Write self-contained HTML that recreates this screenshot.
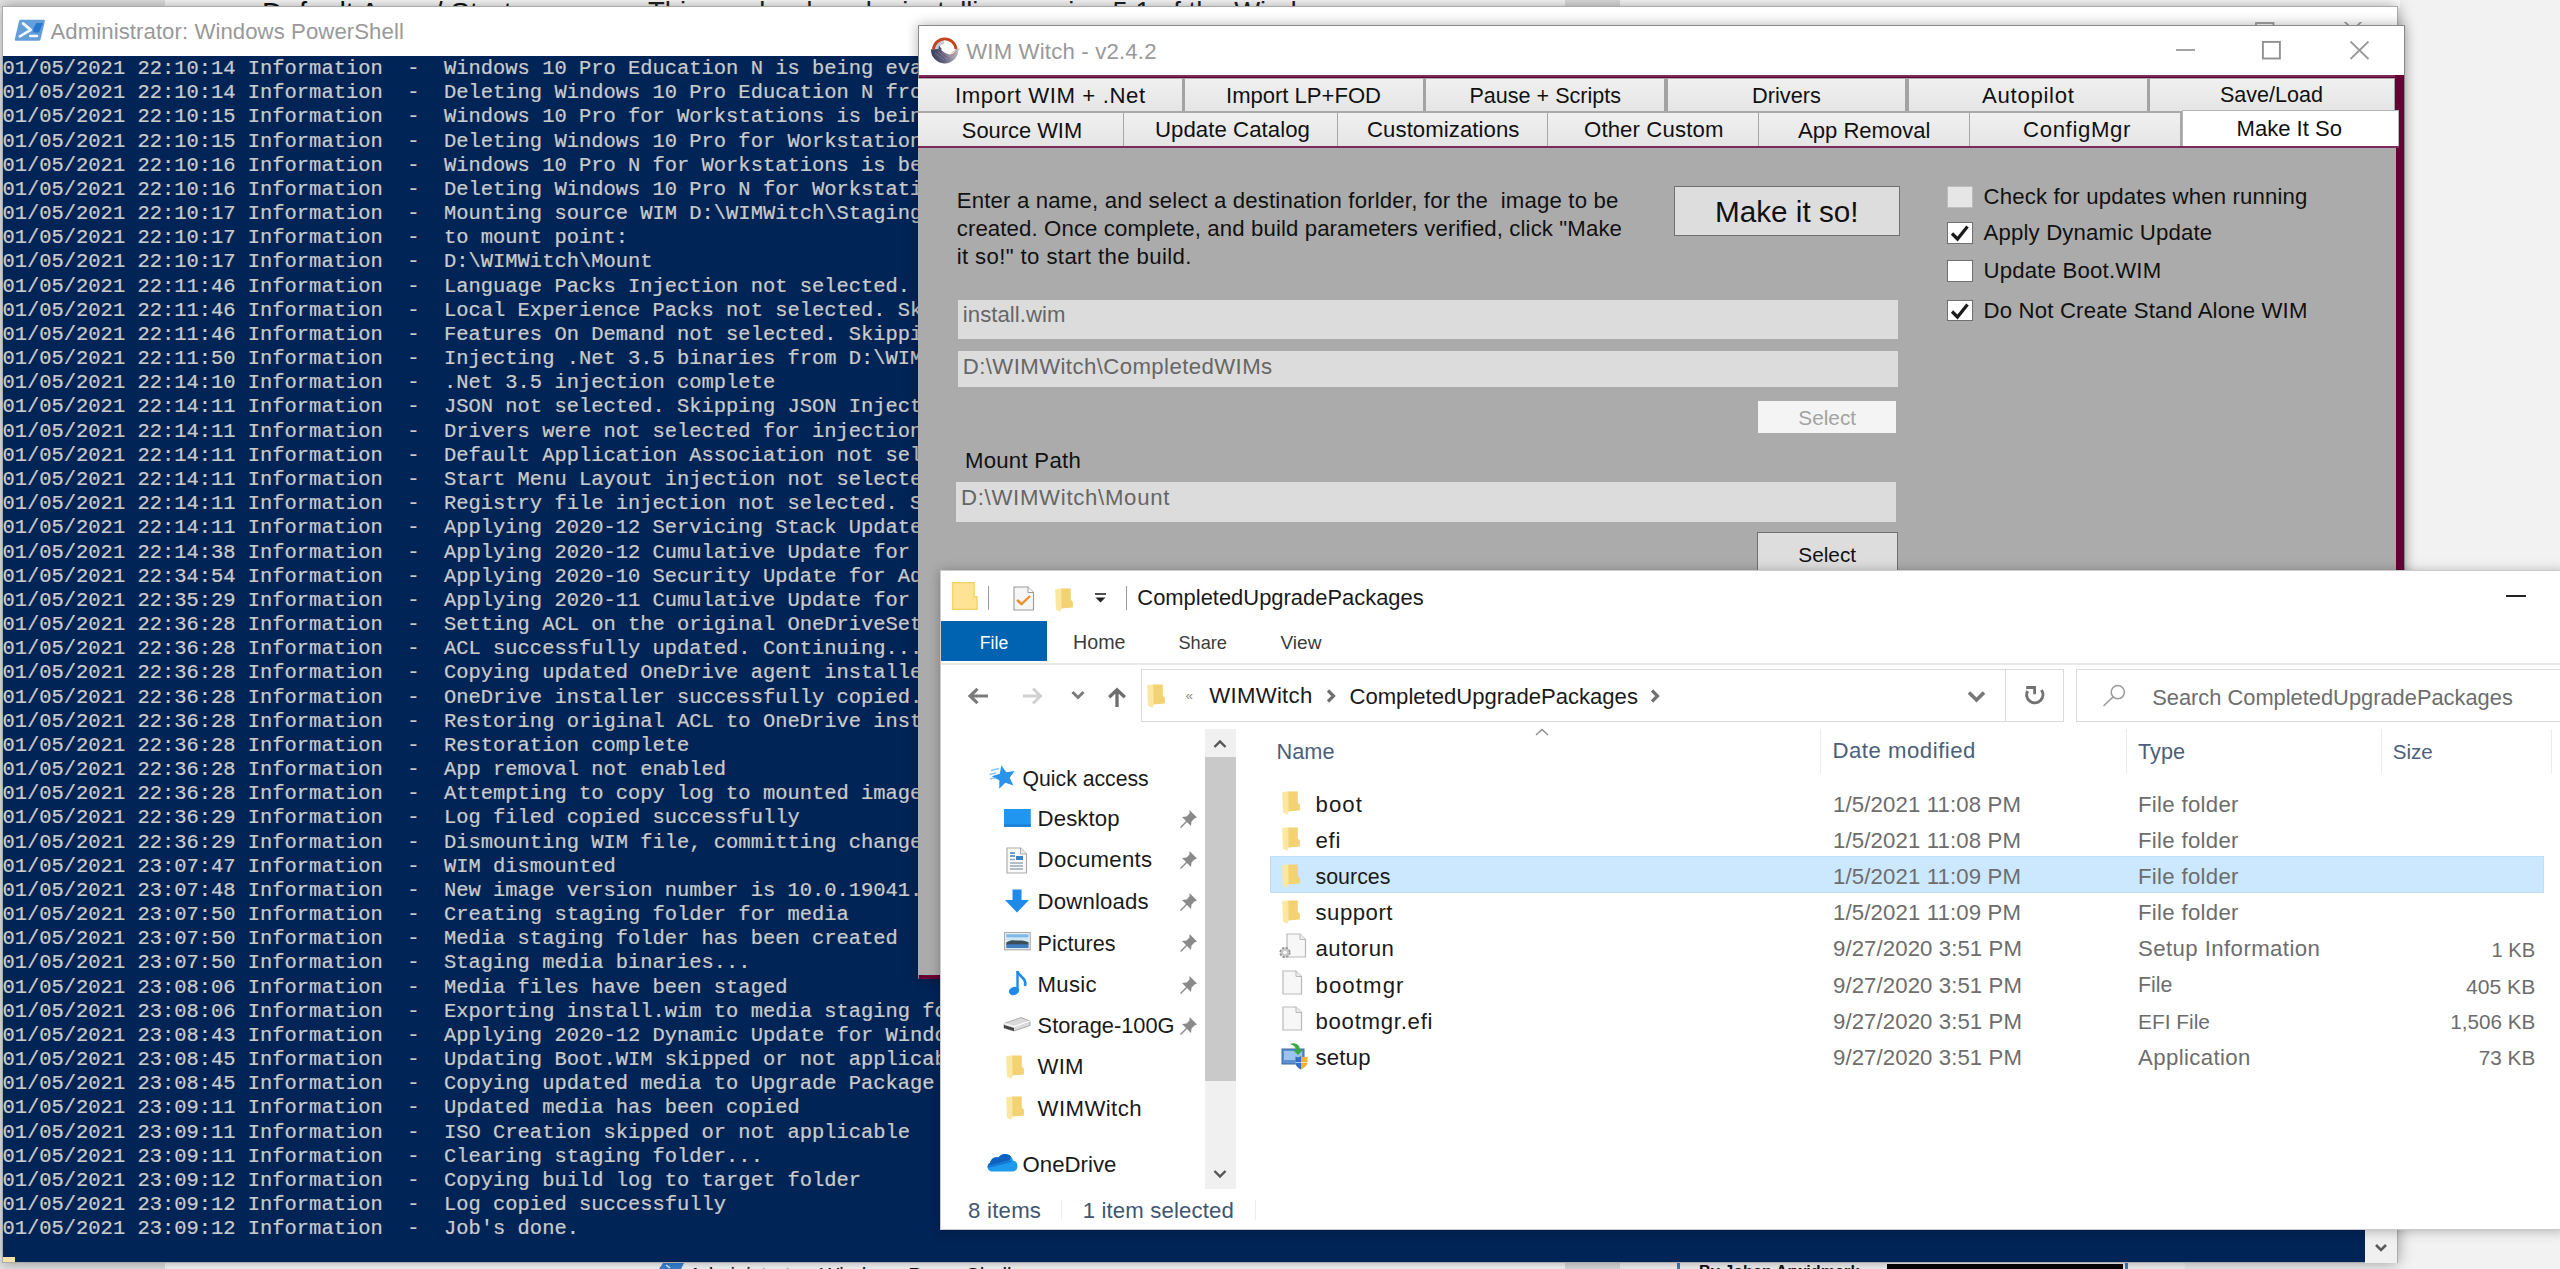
<!DOCTYPE html>
<html><head><meta charset="utf-8"><title>WIM Witch</title>
<style>
html,body{margin:0;padding:0;}
body{width:2560px;height:1269px;overflow:hidden;position:relative;background:#f2f2f2;font-family:"Liberation Sans",sans-serif;}
.r{position:absolute;box-sizing:border-box;display:block;}
.t{position:absolute;white-space:pre;line-height:1;font-family:"Liberation Sans",sans-serif;}
.ps{position:absolute;white-space:pre;font-family:"Liberation Mono",monospace;color:#cbcbcb;-webkit-text-stroke:0.22px #cbcbcb;margin:0;}
</style></head><body>
<div class="r " style="left:0px;top:0px;width:165px;height:8px;background:#e6e6e6;"></div>
<div class="r " style="left:165px;top:0px;width:1400px;height:8px;background:#ffffff;"></div>
<div class="r " style="left:1565px;top:0px;width:55px;height:8px;background:#e2e2e2;"></div>
<div class="r " style="left:1620px;top:0px;width:780px;height:8px;background:#ffffff;"></div>
<div class="r" style="left:0;top:0;width:2400px;height:7px;overflow:hidden;"><span class="t" style="left:262px;top:-1px;font-size:29px;color:#111;">Default Apps / Start</span><span class="t" style="left:648px;top:-2.5px;font-size:27.4px;color:#222;">This can be done by installing version 5.1 of the Windows</span></div>
<div class="r " style="left:0px;top:1260px;width:165px;height:9px;background:#e6e6e6;"></div>
<div class="r " style="left:165px;top:1260px;width:1400px;height:9px;background:#ffffff;"></div>
<div class="r " style="left:1565px;top:1260px;width:55px;height:9px;background:#e2e2e2;"></div>
<div class="r " style="left:1620px;top:1260px;width:565px;height:9px;background:#fbfbfb;"></div>
<div class="r " style="left:1677px;top:1263px;width:3px;height:6px;background:#3f7fd6;"></div>
<div class="r " style="left:1886.5px;top:1264px;width:236px;height:5px;background:#050505;"></div>
<div class="r " style="left:2124.5px;top:1263px;width:3px;height:6px;background:#3f7fd6;"></div>
<div class="r" style="left:0;top:1262px;width:2400px;height:7px;overflow:hidden;"><span class="t" style="left:688.5px;top:2.5px;font-size:20.4px;color:#111;">Administrator: Windows PowerShell</span><span class="t" style="left:1699px;top:0.5px;font-size:16.2px;font-weight:bold;color:#111;">By Johan Arwidmark</span></div>
<svg class="r" style="left:659px;top:1263px;" width="25" height="6" viewBox="0 0 25 6"><path d="M4 0 H25 L22 6 H0 Z" fill="#3b87dd"/><path d="M7 2 L11 5" stroke="#fff" stroke-width="1.5"/></svg>
<div class="r pswin" style="left:2px;top:6px;width:2396px;height:1257px;background:#ffffff;border:1px solid #ababab;box-shadow:0 0 14px rgba(0,0,0,.38);"></div>
<div class="r " style="left:3px;top:56px;width:2394px;height:1206px;background:#012456;"></div>
<svg class="r" style="left:14px;top:19px;" width="32" height="23" viewBox="0 0 32 23"><path d="M6.6 0.7 H29.6 Q31.3 0.7 30.9 2.2 L26.6 20.2 Q26.2 21.7 24.7 21.7 H2 Q0.4 21.7 0.8 20.2 L5 2.2 Q5.4 0.7 6.6 0.7 Z" fill="#649ed9"/><path d="M22.6 4 H29 L25 13.4 H19.5 Q18.5 9 22.6 4 Z" fill="#2676d2"/><path d="M9 4.4 L16.7 10.9 L5.9 17.4" fill="none" stroke="#f2f8ff" stroke-width="2.7" stroke-linecap="round" stroke-linejoin="round"/><path d="M16.2 17.1 H23" stroke="#f2f8ff" stroke-width="2.5" stroke-linecap="round"/></svg>
<span class="t" style="top:21.31px;font-size:22.20px;color:#999999;left:50.50px;letter-spacing:0.059px;">Administrator: Windows PowerShell</span>
<svg class="r" style="left:2255px;top:21.5px;" width="22" height="5" viewBox="0 0 22 5"><rect x="1" y="1" width="17.5" height="12" fill="none" stroke="#9a9a9a" stroke-width="1.8"/></svg>
<svg class="r" style="left:2343px;top:21.5px;" width="22" height="5" viewBox="0 0 22 5"><path d="M1 -1 L10 8 M19 -1 L10 8" stroke="#9a9a9a" stroke-width="1.7" fill="none"/></svg>
<pre class="ps" style="left:2.5px;top:57.07px;font-size:20.45px;line-height:24.167px;">01/05/2021 22:10:14 Information  -  Windows 10 Pro Education N is being evaluated
01/05/2021 22:10:14 Information  -  Deleting Windows 10 Pro Education N from WIM
01/05/2021 22:10:15 Information  -  Windows 10 Pro for Workstations is being evaluated
01/05/2021 22:10:15 Information  -  Deleting Windows 10 Pro for Workstations from WIM
01/05/2021 22:10:16 Information  -  Windows 10 Pro N for Workstations is being evaluated
01/05/2021 22:10:16 Information  -  Deleting Windows 10 Pro N for Workstations from WIM
01/05/2021 22:10:17 Information  -  Mounting source WIM D:\WIMWitch\Staging\install.wim
01/05/2021 22:10:17 Information  -  to mount point:
01/05/2021 22:10:17 Information  -  D:\WIMWitch\Mount
01/05/2021 22:11:46 Information  -  Language Packs Injection not selected. Skipping
01/05/2021 22:11:46 Information  -  Local Experience Packs not selected. Skipping
01/05/2021 22:11:46 Information  -  Features On Demand not selected. Skipping
01/05/2021 22:11:50 Information  -  Injecting .Net 3.5 binaries from D:\WIMWitch\imports
01/05/2021 22:14:10 Information  -  .Net 3.5 injection complete
01/05/2021 22:14:11 Information  -  JSON not selected. Skipping JSON Injection
01/05/2021 22:14:11 Information  -  Drivers were not selected for injection. Skipping.
01/05/2021 22:14:11 Information  -  Default Application Association not selected. Skipping
01/05/2021 22:14:11 Information  -  Start Menu Layout injection not selected. Skipping
01/05/2021 22:14:11 Information  -  Registry file injection not selected. Skipping
01/05/2021 22:14:11 Information  -  Applying 2020-12 Servicing Stack Update for Windows 10
01/05/2021 22:14:38 Information  -  Applying 2020-12 Cumulative Update for Windows 10
01/05/2021 22:34:54 Information  -  Applying 2020-10 Security Update for Adobe Flash Player
01/05/2021 22:35:29 Information  -  Applying 2020-11 Cumulative Update for .NET Framework
01/05/2021 22:36:28 Information  -  Setting ACL on the original OneDriveSetup.exe file
01/05/2021 22:36:28 Information  -  ACL successfully updated. Continuing...
01/05/2021 22:36:28 Information  -  Copying updated OneDrive agent installer...
01/05/2021 22:36:28 Information  -  OneDrive installer successfully copied.
01/05/2021 22:36:28 Information  -  Restoring original ACL to OneDrive installer.
01/05/2021 22:36:28 Information  -  Restoration complete
01/05/2021 22:36:28 Information  -  App removal not enabled
01/05/2021 22:36:28 Information  -  Attempting to copy log to mounted image
01/05/2021 22:36:29 Information  -  Log filed copied successfully
01/05/2021 22:36:29 Information  -  Dismounting WIM file, committing changes
01/05/2021 23:07:47 Information  -  WIM dismounted
01/05/2021 23:07:48 Information  -  New image version number is 10.0.19041.685
01/05/2021 23:07:50 Information  -  Creating staging folder for media
01/05/2021 23:07:50 Information  -  Media staging folder has been created
01/05/2021 23:07:50 Information  -  Staging media binaries...
01/05/2021 23:08:06 Information  -  Media files have been staged
01/05/2021 23:08:06 Information  -  Exporting install.wim to media staging folder...
01/05/2021 23:08:43 Information  -  Applying 2020-12 Dynamic Update for Windows 10 Version
01/05/2021 23:08:45 Information  -  Updating Boot.WIM skipped or not applicable
01/05/2021 23:08:45 Information  -  Copying updated media to Upgrade Package folder...
01/05/2021 23:09:11 Information  -  Updated media has been copied
01/05/2021 23:09:11 Information  -  ISO Creation skipped or not applicable
01/05/2021 23:09:11 Information  -  Clearing staging folder...
01/05/2021 23:09:12 Information  -  Copying build log to target folder
01/05/2021 23:09:12 Information  -  Log copied successfully
01/05/2021 23:09:12 Information  -  Job&#x27;s done.</pre>
<div class="r " style="left:3px;top:1257px;width:12px;height:5px;background:#f5e3a5;"></div>
<div class="r " style="left:2365px;top:1230px;width:32px;height:32.5px;background:#f0f0f0;"></div>
<svg class="r" style="left:2373px;top:1242px;" width="16" height="12" viewBox="0 0 16 12"><path d="M3 3 L8 8 L13 3" fill="none" stroke="#5a5a5a" stroke-width="2.6"/></svg>
<div class="r " style="left:918px;top:25px;width:1487px;height:953.5px;background:#660033;box-shadow:0 0 12px rgba(0,0,0,.30);border:1px solid #8a8a8a;border-bottom:none;"></div>
<div class="r " style="left:919px;top:26px;width:1485px;height:49px;background:#ffffff;"></div>
<svg class="r" style="left:930px;top:36px;" width="32" height="28" viewBox="0 0 32 28"><defs><linearGradient id="wg" x1="0" y1="0" x2="1" y2="0"><stop offset="0" stop-color="#3a3d5e"/><stop offset=".45" stop-color="#62627f"/><stop offset=".8" stop-color="#a59fb0"/><stop offset="1" stop-color="#d0c8cc"/></linearGradient></defs>
<path d="M6.8 13.2 A7.9 7.9 0 0 1 13.8 5.7" stroke="#c4c8d5" stroke-width="4.8" fill="none"/>
<path d="M1 13.2 A13.6 13.6 0 0 0 28.4 14.2 L30 12.6 L26 12.8 C24.6 16.6 22.4 18.6 20 18.5 C17.5 18.4 15 17.2 13.2 15.8 C12 14.9 11.2 14 10.8 13 Z" fill="url(#wg)"/>
<path d="M9 9.5 L12 13.2 L8.4 13.6 Z" fill="#4c4e70"/>
<path d="M5 17 L14 24 M8 15.5 L18 24 M12 16.5 L22 23 M16.5 18.2 L24.5 21" stroke="#b9b4c4" stroke-width=".7" opacity=".55"/>
<path d="M21 17.5 L24.5 14.5 M19 21 L25.5 17" stroke="#d08a5c" stroke-width=".9" opacity=".7"/>
<path d="M3.5 13.2 A11.3 11.3 0 0 1 26 13" stroke="#c4421e" stroke-width="2.9" fill="none"/></svg>
<span class="t" style="top:40.51px;font-size:22.20px;color:#999999;left:966.20px;letter-spacing:0.171px;">WIM Witch - v2.4.2</span>
<svg class="r" style="left:2175px;top:40px;" width="24" height="20" viewBox="0 0 24 20"><path d="M1 10 H20" stroke="#9a9a9a" stroke-width="1.8"/></svg>
<svg class="r" style="left:2261px;top:40px;" width="24" height="20" viewBox="0 0 24 20"><rect x="1.9" y="1.9" width="17" height="16.6" fill="none" stroke="#909090" stroke-width="1.9"/></svg>
<svg class="r" style="left:2349px;top:40px;" width="22" height="22" viewBox="0 0 22 22"><path d="M1.5 1.5 L19.5 19 M19.5 1.5 L1.5 19" stroke="#9a9a9a" stroke-width="1.8"/></svg>
<div class="r " style="left:919px;top:75px;width:1476px;height:2.2px;background:#7a2b57;"></div>
<div class="r " style="left:918px;top:77.5px;width:1477px;height:34px;background:#a3a3a3;"></div>
<div class="r " style="left:918px;top:77.5px;width:263.5px;height:33.5px;background:linear-gradient(#f0f0f0,#e5e5e5);border-top:1px solid #acacac;"></div>
<div class="r " style="left:1185px;top:77.5px;width:237.5px;height:33.5px;background:linear-gradient(#f0f0f0,#e5e5e5);border-top:1px solid #acacac;"></div>
<div class="r " style="left:1426px;top:77.5px;width:238px;height:33.5px;background:linear-gradient(#f0f0f0,#e5e5e5);border-top:1px solid #acacac;"></div>
<div class="r " style="left:1667.5px;top:77.5px;width:237.5px;height:33.5px;background:linear-gradient(#f0f0f0,#e5e5e5);border-top:1px solid #acacac;"></div>
<div class="r " style="left:1909px;top:77.5px;width:237.5px;height:33.5px;background:linear-gradient(#f0f0f0,#e5e5e5);border-top:1px solid #acacac;"></div>
<div class="r " style="left:2150px;top:77.5px;width:244px;height:33.5px;background:linear-gradient(#f0f0f0,#e5e5e5);border-top:1px solid #acacac;"></div>
<div class="r " style="left:918px;top:111px;width:1476px;height:2px;background:#a9a9a9;"></div>
<div class="r " style="left:918px;top:113px;width:207.8px;height:32.6px;background:linear-gradient(#f0f0f0,#e5e5e5);border-right:3.4px solid #a7a7a7;"></div>
<div class="r " style="left:1124px;top:113px;width:215.8px;height:32.6px;background:linear-gradient(#f0f0f0,#e5e5e5);border-right:3.4px solid #a7a7a7;"></div>
<div class="r " style="left:1338px;top:113px;width:211.8px;height:32.6px;background:linear-gradient(#f0f0f0,#e5e5e5);border-right:3.4px solid #a7a7a7;"></div>
<div class="r " style="left:1548px;top:113px;width:212.8px;height:32.6px;background:linear-gradient(#f0f0f0,#e5e5e5);border-right:3.4px solid #a7a7a7;"></div>
<div class="r " style="left:1759px;top:113px;width:212.8px;height:32.6px;background:linear-gradient(#f0f0f0,#e5e5e5);border-right:3.4px solid #a7a7a7;"></div>
<div class="r " style="left:1970px;top:113px;width:212.8px;height:32.6px;background:linear-gradient(#f0f0f0,#e5e5e5);border-right:3.4px solid #a7a7a7;"></div>
<div class="r " style="left:2181.5px;top:110.3px;width:217.5px;height:35.4px;background:#ffffff;border-top:1px solid #b5b5b5;border-left:1px solid #b5b5b5;border-right:1px solid #b5b5b5;"></div>
<div class="r " style="left:918px;top:145.6px;width:1481px;height:2.2px;background:#7a2b57;"></div>
<div class="r " style="left:918px;top:147.5px;width:1477.5px;height:827px;background:#ababab;"></div>
<span class="t" style="top:84.51px;font-size:22.20px;color:#111;left:954.90px;letter-spacing:0.606px;">Import WIM + .Net</span>
<span class="t" style="top:84.64px;font-size:22.05px;color:#111;left:1226.00px;">Import LP+FOD</span>
<span class="t" style="top:85.06px;font-size:21.55px;color:#111;left:1469.50px;">Pause + Scripts</span>
<span class="t" style="top:84.85px;font-size:21.79px;color:#111;left:1752.00px;">Drivers</span>
<span class="t" style="top:84.51px;font-size:22.20px;color:#111;left:1982.00px;letter-spacing:0.701px;">Autopilot</span>
<span class="t" style="top:85.07px;font-size:21.54px;color:#111;left:2220.00px;">Save/Load</span>
<span class="t" style="top:119.67px;font-size:21.89px;color:#111;left:961.80px;">Source WIM</span>
<span class="t" style="top:119.41px;font-size:22.20px;color:#111;left:1155.00px;letter-spacing:0.056px;">Update Catalog</span>
<span class="t" style="top:119.41px;font-size:22.20px;color:#111;left:1367.00px;letter-spacing:0.057px;">Customizations</span>
<span class="t" style="top:119.41px;font-size:22.20px;color:#111;left:1584.00px;letter-spacing:0.120px;">Other Custom</span>
<span class="t" style="top:119.52px;font-size:22.07px;color:#111;left:1798.00px;">App Removal</span>
<span class="t" style="top:119.41px;font-size:22.20px;color:#111;left:2023.00px;letter-spacing:0.637px;">ConfigMgr</span>
<span class="t" style="top:117.52px;font-size:22.07px;color:#111;left:2236.50px;">Make It So</span>
<span class="t" style="top:190.41px;font-size:22.20px;color:#111;left:956.70px;letter-spacing:0.174px;">Enter a name, and select a destination forlder, for the  image to be</span>
<span class="t" style="top:218.11px;font-size:22.20px;color:#111;left:956.70px;letter-spacing:0.115px;">created. Once complete, and build parameters verified, click &quot;Make</span>
<span class="t" style="top:245.61px;font-size:22.20px;color:#111;left:956.70px;letter-spacing:0.375px;">it so!&quot; to start the build.</span>
<div class="r " style="left:1674px;top:186px;width:226px;height:49.5px;background:#dddddd;border:1.5px solid #707070;"></div>
<span class="t" style="top:197.16px;font-size:29.70px;color:#111;left:1715.00px;">Make it so!</span>
<div class="r " style="left:957.8px;top:299.6px;width:940.5px;height:39.5px;background:#dcdcdc;"></div>
<span class="t" style="top:303.91px;font-size:22.20px;color:#666;left:962.80px;letter-spacing:0.042px;">install.wim</span>
<div class="r " style="left:957.8px;top:351px;width:940.5px;height:36px;background:#dcdcdc;"></div>
<span class="t" style="top:356.01px;font-size:22.20px;color:#666;left:962.80px;letter-spacing:0.407px;">D:\WIMWitch\CompletedWIMs</span>
<div class="r " style="left:1758.2px;top:401px;width:138px;height:31.6px;background:#f4f4f4;"></div>
<span class="t" style="top:407.90px;font-size:20.80px;color:#a3a3a3;left:1798.30px;">Select</span>
<span class="t" style="top:449.91px;font-size:22.20px;color:#111;left:964.90px;letter-spacing:0.274px;">Mount Path</span>
<div class="r " style="left:956px;top:482.3px;width:940.2px;height:39.3px;background:#dcdcdc;"></div>
<span class="t" style="top:486.51px;font-size:22.20px;color:#666;left:961.00px;letter-spacing:0.697px;">D:\WIMWitch\Mount</span>
<div class="r " style="left:1756.8px;top:532.3px;width:141px;height:45px;background:#dddddd;border:1.5px solid #707070;"></div>
<span class="t" style="top:545.10px;font-size:20.80px;color:#111;left:1798.30px;">Select</span>
<div class="r " style="left:1947.3px;top:185.8px;width:26.2px;height:21.8px;background:#e6e6e6;border:1.5px solid #bdbdbd;"></div>
<div class="r " style="left:1947.3px;top:222px;width:26.2px;height:21.8px;background:#ffffff;border:1.5px solid #707070;"></div>
<svg class="r" style="left:1947.3px;top:222px;" width="26" height="22" viewBox="0 0 26 22"><path d="M5 11.5 L10.5 17 L20.5 4.5" fill="none" stroke="#1a1a1a" stroke-width="3.2"/></svg>
<div class="r " style="left:1947.3px;top:260.2px;width:26.2px;height:21.8px;background:#ffffff;border:1.5px solid #707070;"></div>
<div class="r " style="left:1947.3px;top:299.6px;width:26.2px;height:21.8px;background:#ffffff;border:1.5px solid #707070;"></div>
<svg class="r" style="left:1947.3px;top:299.6px;" width="26" height="22" viewBox="0 0 26 22"><path d="M5 11.5 L10.5 17 L20.5 4.5" fill="none" stroke="#1a1a1a" stroke-width="3.2"/></svg>
<span class="t" style="top:186.21px;font-size:22.20px;color:#111;left:1983.60px;letter-spacing:0.150px;">Check for updates when running</span>
<span class="t" style="top:222.31px;font-size:22.20px;color:#111;left:1983.60px;letter-spacing:0.152px;">Apply Dynamic Update</span>
<span class="t" style="top:260.11px;font-size:22.20px;color:#111;left:1983.60px;letter-spacing:0.178px;">Update Boot.WIM</span>
<span class="t" style="top:299.71px;font-size:22.20px;color:#111;left:1983.60px;letter-spacing:0.158px;">Do Not Create Stand Alone WIM</span>
<div class="r " style="left:940px;top:570px;width:1625px;height:660px;background:#ffffff;box-shadow:0 1px 11px rgba(0,0,0,.27);border:1px solid rgba(90,90,90,.32);"></div>
<svg class="r" style="left:952px;top:582px;" width="26" height="28" viewBox="0 0 26 28"><rect x="0.7" y="0.7" width="21.5" height="26.6" fill="#ffe394" stroke="#f4d46a" stroke-width="1.4"/><path d="M22.2 15 H25 V27.3 H20" fill="#ffe394" stroke="#f0cf63" stroke-width="1.3"/></svg>
<div class="r " style="left:987.5px;top:585.5px;width:1.5px;height:24px;background:#9b9b9b;"></div>
<svg class="r" style="left:1013px;top:586px;" width="22" height="25" viewBox="0 0 22 25"><path d="M1 1 H15 L20.5 6.5 V24 H1 Z" fill="#f6f6f6" stroke="#9a9a9a" stroke-width="1.1"/><path d="M15 1 V6.5 H20.5" fill="#fff" stroke="#9a9a9a" stroke-width="1"/><path d="M4 14 L8.5 18 L17 10" fill="none" stroke="#e8912d" stroke-width="2.4"/></svg>
<svg class="r" style="left:1055px;top:587.5px;" width="19" height="24" viewBox="0 0 19 24"><path d="M6 0.6 L15.8 0.6 L15.8 11.8 L17.9 13.8 L17.9 19.6 L6 20.5 Z" fill="#f2d272"/>
<path d="M0.2 1.3 L6.3 0.3 L6.6 20.4 L5.4 23.7 L1 21.8 Z" fill="#fbe7a0"/></svg>
<svg class="r" style="left:1094px;top:592px;" width="14" height="12" viewBox="0 0 14 12"><path d="M1 2 H12" stroke="#222" stroke-width="1.6"/><path d="M1.5 5.5 H11.5 L6.5 10.5 Z" fill="#222"/></svg>
<div class="r " style="left:1125.5px;top:585.5px;width:1.5px;height:24px;background:#9b9b9b;"></div>
<span class="t" style="top:587.44px;font-size:21.93px;color:#1a1a1a;left:1137.30px;">CompletedUpgradePackages</span>
<div class="r " style="left:2506px;top:595px;width:20px;height:2px;background:#222;"></div>
<div class="r " style="left:941px;top:621.3px;width:106px;height:39.4px;background:#0063b1;"></div>
<span class="t" style="top:634.68px;font-size:17.63px;color:#ffffff;left:979.80px;">File</span>
<span class="t" style="top:632.94px;font-size:19.68px;color:#3b3b3b;left:1073.00px;">Home</span>
<span class="t" style="top:634.18px;font-size:18.21px;color:#3b3b3b;left:1178.40px;">Share</span>
<span class="t" style="top:633.45px;font-size:19.07px;color:#3b3b3b;left:1280.50px;">View</span>
<div class="r " style="left:941px;top:662.5px;width:1619px;height:2px;background:#e9e9e9;"></div>
<svg class="r" style="left:967px;top:687px;" width="22" height="18" viewBox="0 0 22 18"><path d="M21 9 H3.5 M10.5 1.8 L3 9 L10.5 16.2" fill="none" stroke="#7a7a7a" stroke-width="3.2"/></svg>
<svg class="r" style="left:1022px;top:687px;" width="22" height="18" viewBox="0 0 22 18"><path d="M1 9 H18.5 M11 1.5 L18.5 9 L11 16.5" fill="none" stroke="#d0d0d0" stroke-width="3"/></svg>
<svg class="r" style="left:1071px;top:690px;" width="14" height="11" viewBox="0 0 14 11"><path d="M1.5 2 L7 7.5 L12.5 2" fill="none" stroke="#7a7a7a" stroke-width="3"/></svg>
<svg class="r" style="left:1107px;top:687px;" width="20" height="21" viewBox="0 0 20 21"><path d="M10 20 V3.5 M2.2 10.3 L10 2.8 L17.8 10.3" fill="none" stroke="#6e6e6e" stroke-width="3.3"/></svg>
<div class="r " style="left:1140.5px;top:668.5px;width:923.5px;height:53px;background:#ffffff;border:1.5px solid #d9d9d9;"></div>
<svg class="r" style="left:1147.3px;top:683.5px;" width="19" height="24" viewBox="0 0 19 24"><path d="M6 0.6 L15.8 0.6 L15.8 11.8 L17.9 13.8 L17.9 19.6 L6 20.5 Z" fill="#f2d272"/>
<path d="M0.2 1.3 L6.3 0.3 L6.6 20.4 L5.4 23.7 L1 21.8 Z" fill="#fbe7a0"/></svg>
<span class="t" style="top:688.77px;font-size:13.50px;color:#8a8a8a;left:1185.50px;">«</span>
<span class="t" style="top:685.41px;font-size:22.20px;color:#1a1a1a;left:1209.30px;letter-spacing:0.269px;">WIMWitch</span>
<svg class="r" style="left:1325px;top:688px;" width="12" height="16" viewBox="0 0 12 16"><path d="M3 2.5 L8.5 8 L3 13.5" fill="none" stroke="#707070" stroke-width="3.2"/></svg>
<span class="t" style="top:685.51px;font-size:22.08px;color:#1a1a1a;left:1349.50px;">CompletedUpgradePackages</span>
<svg class="r" style="left:1649px;top:688px;" width="12" height="16" viewBox="0 0 12 16"><path d="M3 2.5 L8.5 8 L3 13.5" fill="none" stroke="#707070" stroke-width="3.2"/></svg>
<svg class="r" style="left:1967px;top:690px;" width="19" height="13" viewBox="0 0 19 13"><path d="M2 2.5 L9.5 10 L17 2.5" fill="none" stroke="#767676" stroke-width="3.6"/></svg>
<div class="r " style="left:2004.5px;top:669px;width:1.5px;height:52px;background:#d9d9d9;"></div>
<svg class="r" style="left:2023px;top:683px;" width="24" height="25" viewBox="0 0 24 25"><path d="M4.6 8 A8.1 8.1 0 1 0 18.4 7" fill="none" stroke="#727272" stroke-width="3"/><path d="M3.2 4.5 H11.6 V11.3" fill="none" stroke="#727272" stroke-width="2.8"/></svg>
<div class="r " style="left:2075.5px;top:668.5px;width:500px;height:53px;background:#ffffff;border:1.5px solid #d9d9d9;"></div>
<svg class="r" style="left:2101px;top:684px;" width="26" height="24" viewBox="0 0 26 24"><circle cx="16.8" cy="8.2" r="6.6" fill="none" stroke="#9a9a9a" stroke-width="1.5"/><path d="M12.1 12.9 L2.5 22" stroke="#9a9a9a" stroke-width="1.5"/></svg>
<span class="t" style="top:686.70px;font-size:21.85px;color:#6d6d6d;left:2152.20px;">Search CompletedUpgradePackages</span>
<div class="r " style="left:1205px;top:729px;width:31px;height:460px;background:#f0f0f0;"></div>
<div class="r " style="left:1205px;top:756.5px;width:31px;height:324px;background:#c9c9c9;"></div>
<svg class="r" style="left:1212px;top:738px;" width="16" height="12" viewBox="0 0 16 12"><path d="M2.5 9 L8 3.5 L13.5 9" fill="none" stroke="#555" stroke-width="2.4"/></svg>
<svg class="r" style="left:1212px;top:1168px;" width="16" height="12" viewBox="0 0 16 12"><path d="M2.5 3 L8 8.5 L13.5 3" fill="none" stroke="#555" stroke-width="2.4"/></svg>
<svg class="r" style="left:988px;top:764px;" width="30" height="26" viewBox="0 0 30 26"><g transform="rotate(-13 16 13)"><path d="M16 1 L19.3 8.8 L27.8 9.5 L21.3 15.1 L23.3 23.4 L16 19 L8.7 23.4 L10.7 15.1 L4.2 9.5 L12.7 8.8 Z" fill="#2a94ea"/></g><path d="M3 6.5 L11 4.5 M1.5 10.5 L8 9 M2 15 L8 13.5" stroke="#5aaef0" stroke-width="1.4" opacity=".7"/></svg>
<span class="t" style="top:768.23px;font-size:21.22px;color:#1a1a1a;left:1022.50px;">Quick access</span>
<span class="t" style="top:808.11px;font-size:22.20px;color:#1a1a1a;left:1037.60px;letter-spacing:0.093px;">Desktop</span>
<svg class="r" style="left:1179px;top:809px;" width="20" height="20" viewBox="0 0 20 20"><path d="M10.5 1 L18 8.5 L15.5 9.5 L12.5 12.5 L12 17 L8 13 L2 19 L1 18 L7 12 L3 8 L7.5 7.5 L10.5 4.5 Z" fill="#8a8a8a"/></svg>
<span class="t" style="top:849.41px;font-size:22.20px;color:#1a1a1a;left:1037.60px;letter-spacing:0.278px;">Documents</span>
<svg class="r" style="left:1179px;top:850.3px;" width="20" height="20" viewBox="0 0 20 20"><path d="M10.5 1 L18 8.5 L15.5 9.5 L12.5 12.5 L12 17 L8 13 L2 19 L1 18 L7 12 L3 8 L7.5 7.5 L10.5 4.5 Z" fill="#8a8a8a"/></svg>
<span class="t" style="top:890.81px;font-size:22.20px;color:#1a1a1a;left:1037.60px;letter-spacing:0.146px;">Downloads</span>
<svg class="r" style="left:1179px;top:891.7px;" width="20" height="20" viewBox="0 0 20 20"><path d="M10.5 1 L18 8.5 L15.5 9.5 L12.5 12.5 L12 17 L8 13 L2 19 L1 18 L7 12 L3 8 L7.5 7.5 L10.5 4.5 Z" fill="#8a8a8a"/></svg>
<span class="t" style="top:932.62px;font-size:21.59px;color:#1a1a1a;left:1037.60px;">Pictures</span>
<svg class="r" style="left:1179px;top:933px;" width="20" height="20" viewBox="0 0 20 20"><path d="M10.5 1 L18 8.5 L15.5 9.5 L12.5 12.5 L12 17 L8 13 L2 19 L1 18 L7 12 L3 8 L7.5 7.5 L10.5 4.5 Z" fill="#8a8a8a"/></svg>
<span class="t" style="top:973.61px;font-size:22.20px;color:#1a1a1a;left:1037.60px;letter-spacing:0.257px;">Music</span>
<svg class="r" style="left:1179px;top:974.5px;" width="20" height="20" viewBox="0 0 20 20"><path d="M10.5 1 L18 8.5 L15.5 9.5 L12.5 12.5 L12 17 L8 13 L2 19 L1 18 L7 12 L3 8 L7.5 7.5 L10.5 4.5 Z" fill="#8a8a8a"/></svg>
<span class="t" style="top:1015.44px;font-size:21.81px;color:#1a1a1a;left:1037.60px;">Storage-100G</span>
<svg class="r" style="left:1179px;top:1016px;" width="20" height="20" viewBox="0 0 20 20"><path d="M10.5 1 L18 8.5 L15.5 9.5 L12.5 12.5 L12 17 L8 13 L2 19 L1 18 L7 12 L3 8 L7.5 7.5 L10.5 4.5 Z" fill="#8a8a8a"/></svg>
<span class="t" style="top:1056.41px;font-size:22.20px;color:#1a1a1a;left:1037.60px;letter-spacing:0.193px;">WIM</span>
<span class="t" style="top:1097.81px;font-size:22.20px;color:#1a1a1a;left:1037.60px;letter-spacing:0.412px;">WIMWitch</span>
<svg class="r" style="left:1003.5px;top:809px;" width="28" height="19" viewBox="0 0 28 19"><rect x="0" y="0" width="26.8" height="17.8" fill="#2196f0"/><rect x="0" y="15.3" width="26.8" height="2.5" fill="#1a7fd8"/></svg>
<svg class="r" style="left:1006px;top:847px;" width="22" height="27" viewBox="0 0 22 27"><path d="M1 1 H14.5 L20.5 7 V26 H1 Z" fill="#fafafa" stroke="#a9a9a9" stroke-width="1.1"/><path d="M14.5 1 V7 H20.5" fill="#eee" stroke="#a9a9a9" stroke-width="1"/><path d="M4 6 H9 M4 9 H9" stroke="#3a82c8" stroke-width="1.4"/><rect x="10" y="9" width="7" height="4" fill="#3a82c8"/><path d="M4 12.5 H9 M4 16 H17 M4 19 H17 M4 22 H17" stroke="#9ab" stroke-width="1.3"/></svg>
<svg class="r" style="left:1004px;top:889px;" width="26" height="26" viewBox="0 0 26 26"><path d="M8.5 0.5 H17.5 V11 H25 L13 23.5 L1 11 H8.5 Z" fill="#1f8ae8"/></svg>
<svg class="r" style="left:1003.5px;top:932.3px;" width="27" height="19" viewBox="0 0 27 19"><rect x="0.6" y="0.6" width="25.6" height="17.2" fill="#f4f4f4" stroke="#a8a8a8" stroke-width="1.1"/><rect x="2.3" y="2.3" width="22.2" height="13.8" fill="#cfe6f7"/><rect x="2.3" y="2.3" width="22.2" height="3" fill="#7db8e8"/><path d="M2.3 10.5 C8 6.5 12 9 16 8.5 S22 9.5 24.5 10 V13 H2.3 Z" fill="#3c4f57"/><rect x="2.3" y="12.3" width="22.2" height="3.8" fill="#3f7fc0"/></svg>
<svg class="r" style="left:1007.5px;top:970px;" width="22" height="27" viewBox="0 0 22 27"><path d="M9.5 1 V19" stroke="#1f8ae8" stroke-width="2.4"/><path d="M9.5 1.5 C11 6.5 19 8 17 16" fill="none" stroke="#1f8ae8" stroke-width="2.6"/><ellipse cx="6" cy="21" rx="5.2" ry="4" fill="#1f8ae8" transform="rotate(-20 6 21)"/></svg>
<svg class="r" style="left:1003px;top:1016px;" width="28" height="16" viewBox="0 0 28 16"><path d="M1 7.5 L18 1.5 L27 5 L27 9.5 L11 15 L1 12 Z" fill="#d9d9d9" stroke="#9a9a9a" stroke-width=".8"/><path d="M1 7.5 L11 10.5 L27 5" fill="none" stroke="#fff" stroke-width="1.2"/><path d="M1 9 L11 12 V15 L1 12 Z" fill="#444"/></svg>
<svg class="r" style="left:1006.3px;top:1055px;" width="19" height="24" viewBox="0 0 19 24"><path d="M6 0.6 L15.8 0.6 L15.8 11.8 L17.9 13.8 L17.9 19.6 L6 20.5 Z" fill="#f2d272"/>
<path d="M0.2 1.3 L6.3 0.3 L6.6 20.4 L5.4 23.7 L1 21.8 Z" fill="#fbe7a0"/></svg>
<svg class="r" style="left:1006.3px;top:1096.3px;" width="19" height="24" viewBox="0 0 19 24"><path d="M6 0.6 L15.8 0.6 L15.8 11.8 L17.9 13.8 L17.9 19.6 L6 20.5 Z" fill="#f2d272"/>
<path d="M0.2 1.3 L6.3 0.3 L6.6 20.4 L5.4 23.7 L1 21.8 Z" fill="#fbe7a0"/></svg>
<svg class="r" style="left:986px;top:1151.5px;" width="32" height="20" viewBox="0 0 32 20"><defs><clipPath id="odc"><path d="M9 19.5 H26 A5.5 5.5 0 0 0 27 8.6 A8 8 0 0 0 12.5 5.5 A6.5 6.5 0 0 0 4 11 A4.6 4.6 0 0 0 5 19.5 Z"/></clipPath></defs><g clip-path="url(#odc)"><rect width="32" height="20" fill="#1e9bed"/><path d="M0 0 H26 L24 8 L1 14.5 Z" fill="#0c62be"/><path d="M0 14.5 L24 8 L26 10 L2 16 Z" fill="#1478d6"/></g></svg>
<span class="t" style="top:1153.61px;font-size:22.20px;color:#1a1a1a;left:1022.50px;letter-spacing:0.034px;">OneDrive</span>
<span class="t" style="top:740.79px;font-size:21.74px;color:#4c607a;left:1276.50px;">Name</span>
<span class="t" style="top:740.41px;font-size:22.20px;color:#4c607a;left:1832.50px;letter-spacing:0.502px;">Date modified</span>
<span class="t" style="top:740.85px;font-size:21.68px;color:#4c607a;left:2138.00px;">Type</span>
<span class="t" style="top:741.79px;font-size:20.56px;color:#4c607a;left:2392.80px;">Size</span>
<div class="r " style="left:1820px;top:729px;width:1.2px;height:44px;background:#ebebeb;"></div>
<div class="r " style="left:2125.5px;top:729px;width:1.2px;height:44px;background:#ebebeb;"></div>
<div class="r " style="left:2381px;top:729px;width:1.2px;height:44px;background:#ebebeb;"></div>
<div class="r " style="left:2550.5px;top:729px;width:1.2px;height:44px;background:#ebebeb;"></div>
<svg class="r" style="left:1534px;top:727px;" width="16" height="10" viewBox="0 0 16 10"><path d="M2 8 L8 2.5 L14 8" fill="none" stroke="#8a8a8a" stroke-width="1.3"/></svg>
<div class="r " style="left:1270px;top:856px;width:1274px;height:37.2px;background:#cce8ff;border:1px solid #bcdffb;"></div>
<span class="t" style="top:793.51px;font-size:22.20px;color:#1a1a1a;left:1315.50px;letter-spacing:1.097px;">boot</span>
<span class="t" style="top:793.51px;font-size:22.20px;color:#6d6d6d;left:1833.00px;letter-spacing:0.128px;">1/5/2021 11:08 PM</span>
<span class="t" style="top:793.51px;font-size:22.20px;color:#6d6d6d;left:2138.00px;letter-spacing:0.303px;">File folder</span>
<svg class="r" style="left:1281.5px;top:791.1999999999999px;" width="19" height="24" viewBox="0 0 19 24"><path d="M6 0.6 L15.8 0.6 L15.8 11.8 L17.9 13.8 L17.9 19.6 L6 20.5 Z" fill="#f2d272"/>
<path d="M0.2 1.3 L6.3 0.3 L6.6 20.4 L5.4 23.7 L1 21.8 Z" fill="#fbe7a0"/></svg>
<span class="t" style="top:829.51px;font-size:22.20px;color:#1a1a1a;left:1315.50px;letter-spacing:0.777px;">efi</span>
<span class="t" style="top:829.51px;font-size:22.20px;color:#6d6d6d;left:1833.00px;letter-spacing:0.128px;">1/5/2021 11:08 PM</span>
<span class="t" style="top:829.51px;font-size:22.20px;color:#6d6d6d;left:2138.00px;letter-spacing:0.303px;">File folder</span>
<svg class="r" style="left:1281.5px;top:827.1999999999999px;" width="19" height="24" viewBox="0 0 19 24"><path d="M6 0.6 L15.8 0.6 L15.8 11.8 L17.9 13.8 L17.9 19.6 L6 20.5 Z" fill="#f2d272"/>
<path d="M0.2 1.3 L6.3 0.3 L6.6 20.4 L5.4 23.7 L1 21.8 Z" fill="#fbe7a0"/></svg>
<span class="t" style="top:866.67px;font-size:21.42px;color:#1a1a1a;left:1315.50px;">sources</span>
<span class="t" style="top:866.01px;font-size:22.20px;color:#6d6d6d;left:1833.00px;letter-spacing:0.128px;">1/5/2021 11:09 PM</span>
<span class="t" style="top:866.01px;font-size:22.20px;color:#6d6d6d;left:2138.00px;letter-spacing:0.303px;">File folder</span>
<svg class="r" style="left:1281.5px;top:863.6999999999999px;" width="19" height="24" viewBox="0 0 19 24"><path d="M6 0.6 L15.8 0.6 L15.8 11.8 L17.9 13.8 L17.9 19.6 L6 20.5 Z" fill="#f2d272"/>
<path d="M0.2 1.3 L6.3 0.3 L6.6 20.4 L5.4 23.7 L1 21.8 Z" fill="#fbe7a0"/></svg>
<span class="t" style="top:902.11px;font-size:22.20px;color:#1a1a1a;left:1315.50px;letter-spacing:0.492px;">support</span>
<span class="t" style="top:902.11px;font-size:22.20px;color:#6d6d6d;left:1833.00px;letter-spacing:0.128px;">1/5/2021 11:09 PM</span>
<span class="t" style="top:902.11px;font-size:22.20px;color:#6d6d6d;left:2138.00px;letter-spacing:0.303px;">File folder</span>
<svg class="r" style="left:1281.5px;top:899.8px;" width="19" height="24" viewBox="0 0 19 24"><path d="M6 0.6 L15.8 0.6 L15.8 11.8 L17.9 13.8 L17.9 19.6 L6 20.5 Z" fill="#f2d272"/>
<path d="M0.2 1.3 L6.3 0.3 L6.6 20.4 L5.4 23.7 L1 21.8 Z" fill="#fbe7a0"/></svg>
<span class="t" style="top:938.11px;font-size:22.20px;color:#1a1a1a;left:1315.50px;letter-spacing:0.534px;">autorun</span>
<span class="t" style="top:938.11px;font-size:22.20px;color:#6d6d6d;left:1833.00px;letter-spacing:0.087px;">9/27/2020 3:51 PM</span>
<span class="t" style="top:938.11px;font-size:22.20px;color:#6d6d6d;left:2138.00px;letter-spacing:0.423px;">Setup Information</span>
<span class="t" style="top:939.80px;font-size:20.20px;color:#6d6d6d;left:2491.50px;">1 KB</span>
<svg class="r" style="left:1277.5px;top:933.4px;" width="30" height="28" viewBox="0 0 30 28"><g transform="translate(8,0)"><path d="M1 1 H14 L19.5 6.5 V24 H1 Z" fill="#f7f7f7" stroke="#b9b9b9" stroke-width="1.2"/><path d="M14 1 V6.5 H19.5" fill="#ececec" stroke="#b9b9b9" stroke-width="1"/></g><circle cx="7" cy="19.5" r="4.8" fill="#c9c9c9" stroke="#909090" stroke-width="1.6" stroke-dasharray="2.2 1.6"/><circle cx="7" cy="19.5" r="1.8" fill="#fff"/></svg>
<span class="t" style="top:974.71px;font-size:22.20px;color:#1a1a1a;left:1315.50px;letter-spacing:1.093px;">bootmgr</span>
<span class="t" style="top:974.71px;font-size:22.20px;color:#6d6d6d;left:1833.00px;letter-spacing:0.087px;">9/27/2020 3:51 PM</span>
<span class="t" style="top:975.38px;font-size:21.41px;color:#6d6d6d;left:2138.00px;">File</span>
<span class="t" style="top:975.62px;font-size:21.13px;color:#6d6d6d;left:2466.00px;">405 KB</span>
<svg class="r" style="left:1281.5px;top:970.4px;" width="21" height="25" viewBox="0 0 21 25"><path d="M1 1 H14 L19.5 6.5 V24 H1 Z" fill="#f7f7f7" stroke="#b9b9b9" stroke-width="1.2"/><path d="M14 1 V6.5 H19.5" fill="#ececec" stroke="#b9b9b9" stroke-width="1"/></svg>
<span class="t" style="top:1010.71px;font-size:22.20px;color:#1a1a1a;left:1315.50px;letter-spacing:0.717px;">bootmgr.efi</span>
<span class="t" style="top:1010.71px;font-size:22.20px;color:#6d6d6d;left:1833.00px;letter-spacing:0.087px;">9/27/2020 3:51 PM</span>
<span class="t" style="top:1011.81px;font-size:20.90px;color:#6d6d6d;left:2138.00px;">EFI File</span>
<span class="t" style="top:1012.01px;font-size:20.66px;color:#6d6d6d;left:2450.30px;">1,506 KB</span>
<svg class="r" style="left:1281.5px;top:1006.4px;" width="21" height="25" viewBox="0 0 21 25"><path d="M1 1 H14 L19.5 6.5 V24 H1 Z" fill="#f7f7f7" stroke="#b9b9b9" stroke-width="1.2"/><path d="M14 1 V6.5 H19.5" fill="#ececec" stroke="#b9b9b9" stroke-width="1"/></svg>
<span class="t" style="top:1046.71px;font-size:22.20px;color:#1a1a1a;left:1315.50px;letter-spacing:0.173px;">setup</span>
<span class="t" style="top:1046.71px;font-size:22.20px;color:#6d6d6d;left:1833.00px;letter-spacing:0.087px;">9/27/2020 3:51 PM</span>
<span class="t" style="top:1046.71px;font-size:22.20px;color:#6d6d6d;left:2138.00px;letter-spacing:0.389px;">Application</span>
<span class="t" style="top:1047.94px;font-size:20.74px;color:#6d6d6d;left:2478.80px;">73 KB</span>
<svg class="r" style="left:1280.5px;top:1041.7px;" width="28" height="28" viewBox="0 0 28 28"><rect x="1" y="7" width="22" height="15" fill="#5a8fd0" stroke="#3d6aa8" stroke-width="1"/><rect x="3" y="9" width="18" height="9" fill="#9cc3ee"/><path d="M9 2 C14 0 19 3 19 8 L22 8 L17 13 L12 8 L15 8 C15 5 12 3 9 2Z" fill="#3aa845"/><path d="M20 14 C22 15.5 24 15.5 26.5 14.5 V21 C26 24 23 26 20 27.5 C17 26 14.5 24 14.5 21 V14.5 C16.5 15.5 18.5 15.5 20 14Z" fill="#f2b32a"/><path d="M20 14 V27.5 C17 26 14.5 24 14.5 21 V14.5 C16.5 15.5 18.5 15.5 20 14Z" fill="#2f6fd0"/><path d="M14.5 20.5 H26.5" stroke="#fff" stroke-width=".6"/></svg>
<span class="t" style="top:1199.51px;font-size:22.20px;color:#3f5670;left:968.00px;letter-spacing:0.241px;">8 items</span>
<span class="t" style="top:1199.51px;font-size:22.20px;color:#3f5670;left:1082.70px;letter-spacing:0.142px;">1 item selected</span>
<div class="r " style="left:1061px;top:1200px;width:1.2px;height:20px;background:#ededed;"></div>
<div class="r " style="left:1255px;top:1200px;width:1.2px;height:20px;background:#ededed;"></div>
</body></html>
